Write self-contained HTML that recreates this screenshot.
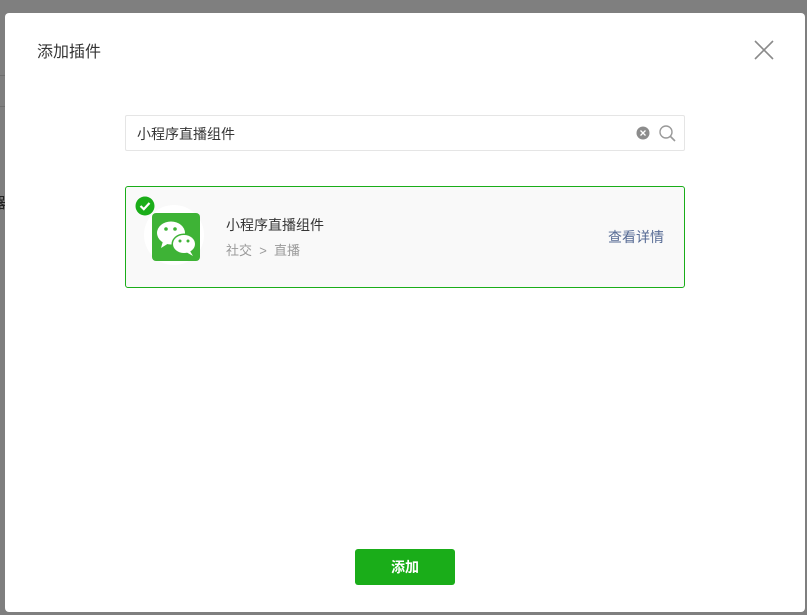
<!DOCTYPE html>
<html><head><meta charset="utf-8"><style>
*{margin:0;padding:0;box-sizing:border-box}
body{width:807px;height:615px;background:#7f7f7f;position:relative;overflow:hidden;font-family:"Liberation Sans","Noto Sans CJK SC",sans-serif}
.dlg{position:absolute;left:5px;top:13px;width:800px;height:599px;background:#fff;border-radius:4px}
.title{position:absolute;left:32px;top:25px;font-size:16px;color:#353535}
.close{position:absolute;left:748px;top:26px}
.search{position:absolute;left:120px;top:102px;width:560px;height:36px;border:1px solid #e5e5e5;border-radius:2px}
.search span{position:absolute;left:11px;top:8px;font-size:14px;color:#353535}
.card{position:absolute;left:120px;top:173px;width:560px;height:102px;border:1px solid #1aad19;border-radius:3px;background:#f9f9f9}
.name{position:absolute;left:100px;top:28px;font-size:14px;color:#353535}
.cat{position:absolute;left:100px;top:53px;font-size:13px;color:#9a9a9a}
.det{position:absolute;right:20px;top:40px;font-size:14px;color:#576b95}
.btn{position:absolute;left:350px;top:536px;width:100px;height:36px;background:#1aad19;border-radius:3px;color:#fff;font-size:14px;font-weight:bold;text-align:center;line-height:36px}
</style></head><body>
<div style="position:absolute;left:0;top:75px;width:5px;height:1px;background:#6e6e6e"></div>
<div style="position:absolute;left:0;top:106px;width:5px;height:1px;background:#6e6e6e"></div>
<div style="position:absolute;left:-9px;top:192px;font-size:15px;color:#222">器</div>
<div class="dlg">
<div class="title">添加插件</div>
<svg class="close" width="22" height="22"><path d="M2 2L20 20M20 2L2 20" stroke="#8a8a8a" stroke-width="1.6"/></svg>
<div class="search"><span>小程序直播组件</span>
<svg style="position:absolute;left:510px;top:10px" width="14" height="14"><circle cx="7" cy="7" r="6.5" fill="#8c8c8c"/><path d="M4.5 4.5L9.5 9.5M9.5 4.5L4.5 9.5" stroke="#fff" stroke-width="1.3"/></svg>
<svg style="position:absolute;left:532px;top:8px" width="20" height="20"><circle cx="8" cy="8" r="6" fill="none" stroke="#9a9a9a" stroke-width="1.4"/><path d="M12.5 12.5L17 17" stroke="#9a9a9a" stroke-width="1.6"/></svg>
</div>
<div class="card">
<div style="position:absolute;left:18px;top:18px;width:60px;height:60px;border-radius:50%;background:#fff"></div>
<svg style="position:absolute;left:26px;top:26px" width="48" height="48"><rect width="48" height="48" rx="4" fill="#3eb336"/>
<ellipse cx="19" cy="20" rx="14" ry="11.5" fill="#fff"/><path d="M11 28L9 35L17 30Z" fill="#fff"/>
<ellipse cx="32" cy="31" rx="12.5" ry="10.5" fill="#3eb336"/>
<ellipse cx="32" cy="31" rx="11" ry="9" fill="#fff"/><path d="M38 38L41 43L34 39Z" fill="#fff"/>
<circle cx="14" cy="16" r="1.8" fill="#3eb336"/><circle cx="23" cy="16" r="1.8" fill="#3eb336"/>
<circle cx="28" cy="28" r="1.5" fill="#3eb336"/><circle cx="36" cy="28" r="1.5" fill="#3eb336"/></svg>
<svg style="position:absolute;left:9px;top:9px" width="20" height="20"><circle cx="10" cy="10" r="9.5" fill="#1aad19"/><path d="M5.5 10L8.8 13.2L14.5 7" stroke="#fff" stroke-width="2.2" fill="none"/></svg>
<div class="name">小程序直播组件</div>
<div class="cat">社交&nbsp;&nbsp;&gt;&nbsp;&nbsp;直播</div>
<div class="det">查看详情</div>
</div>
<div class="btn">添加</div>
</div>
</body></html>
